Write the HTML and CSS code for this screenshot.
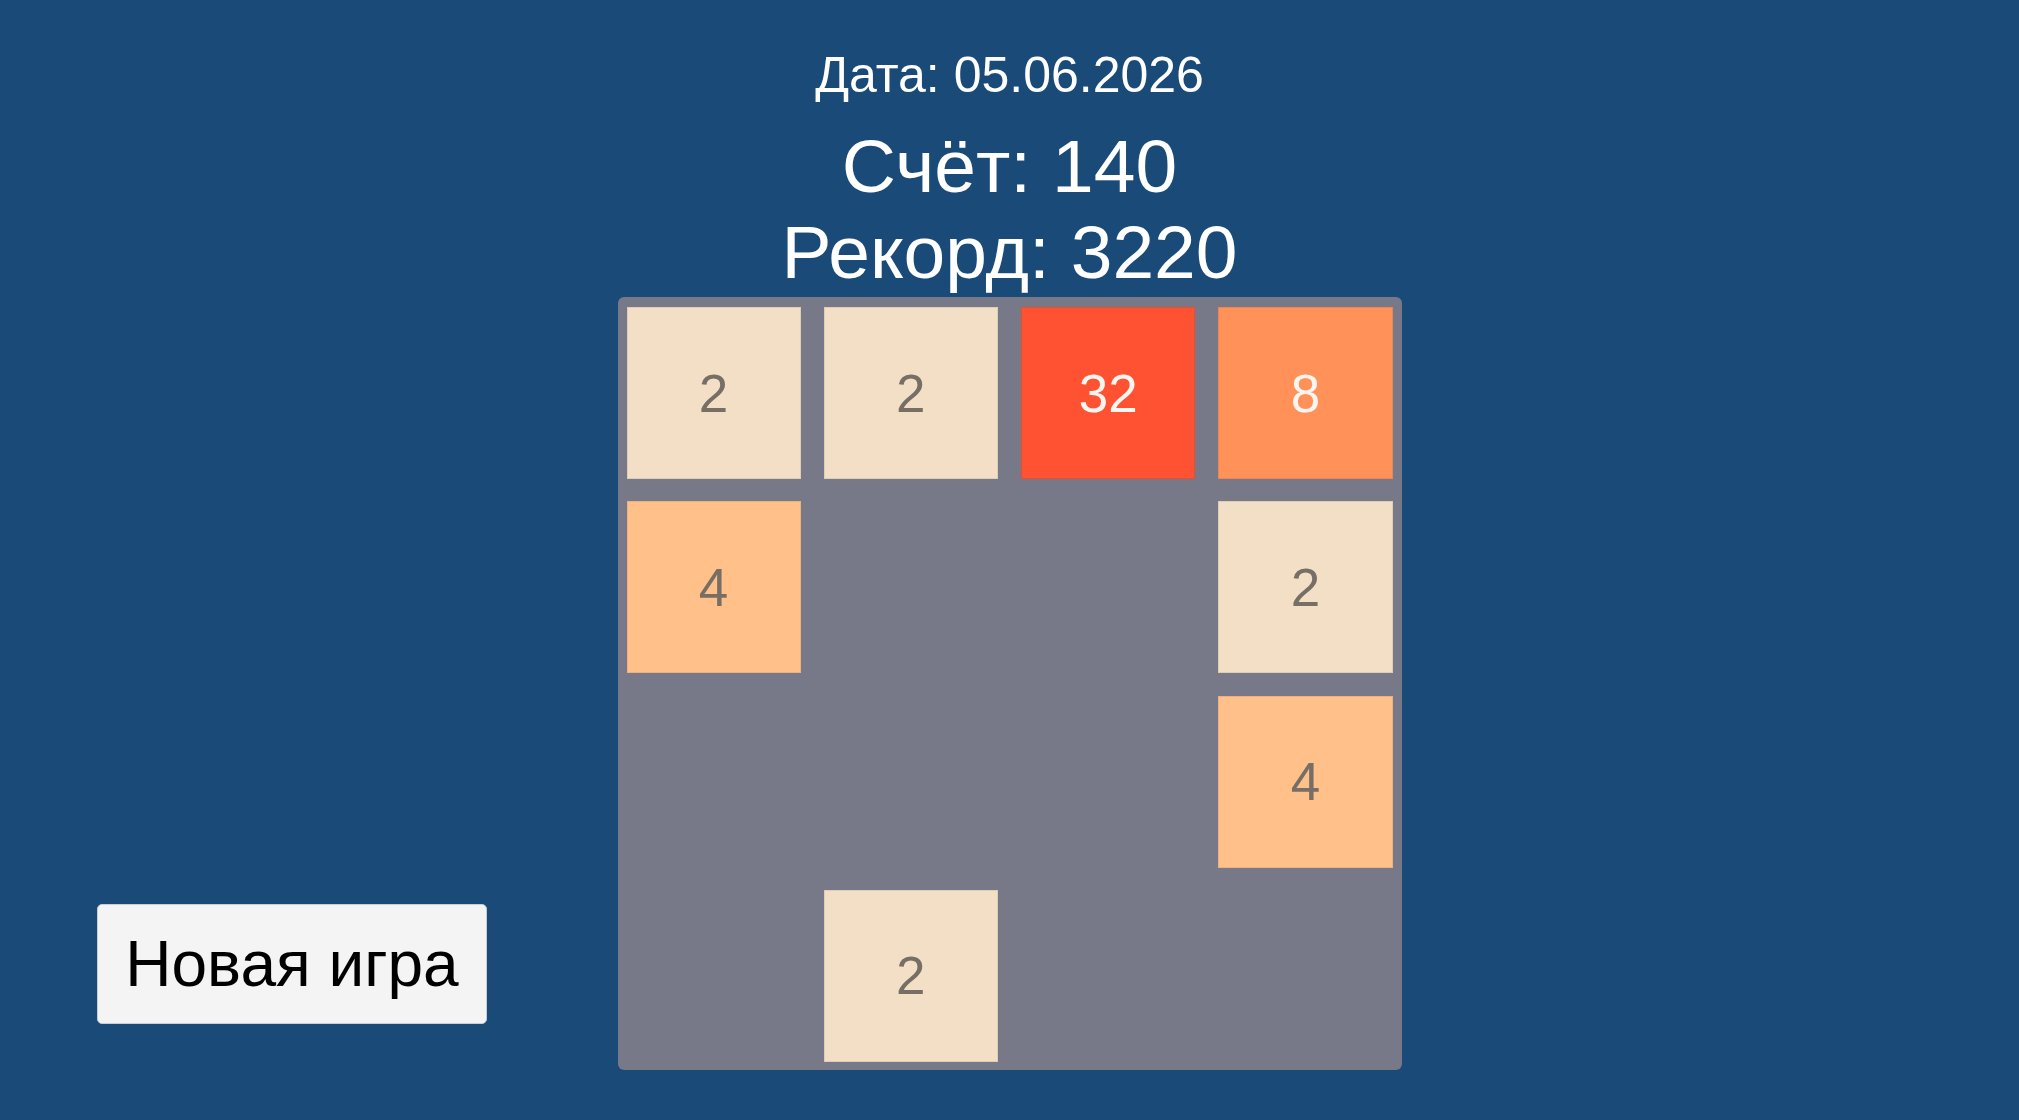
FILE: index.html
```html
<!DOCTYPE html>
<html lang="ru">
<head>
    <meta charset="UTF-8">
    <meta name="viewport" content="width=device-width, initial-scale=1.0">
    <title>2048</title>
    <link rel="stylesheet" href="styles.css">
</head>
<body>
    <div class="screen">
        <div class="side">
            <button class="new-game" id="newGame">Новая игра</button>
        </div>

        <main class="game">
            <div class="date">Дата: 05.06.2026</div>
            <div class="score">Счёт: 140</div>
            <div class="best">Рекорд: 3220</div>

            <div class="board">
                <div class="tile tile-2">2</div>
                <div class="tile tile-2">2</div>
                <div class="tile tile-32">32</div>
                <div class="tile tile-8">8</div>

                <div class="tile tile-4">4</div>
                <div class="cell"></div>
                <div class="cell"></div>
                <div class="tile tile-2">2</div>

                <div class="cell"></div>
                <div class="cell"></div>
                <div class="cell"></div>
                <div class="tile tile-4">4</div>

                <div class="cell"></div>
                <div class="tile tile-2">2</div>
                <div class="cell"></div>
                <div class="cell"></div>
            </div>
        </main>

        <div class="side"></div>
    </div>
</body>
</html>
```

FILE: styles.css
```css
* {
    margin: 0;
    padding: 0;
    box-sizing: border-box;
}

body {
    font-family: "Liberation Sans", Arial, sans-serif;
    background: #194a78;
    min-height: 100vh;
    overflow: hidden;
}

.screen {
    display: grid;
    grid-template-columns: 1fr auto 1fr;
    height: 100vh;
}

.side {
    display: flex;
    align-items: flex-end;
    padding: 0 0 96px 97px;
}

.new-game {
    width: 390px;
    height: 120px;
    background: #f4f4f4;
    border: 1px solid #c9ced6;
    border-radius: 5px;
    font-family: inherit;
    font-size: 64px;
    color: #000;
    cursor: pointer;
}

.game {
    display: flex;
    flex-direction: column;
    align-items: center;
    padding-top: 50px;
    color: #fff;
}

.date {
    font-size: 50px;
    line-height: 50px;
}

.score {
    font-size: 75px;
    line-height: 75px;
    margin-top: 29px;
}

.best {
    font-size: 75px;
    line-height: 75px;
    margin-top: 11px;
}

.board {
    margin-top: 7px;
    width: 784px;
    height: 773px;
    padding: 10px 9px 8px;
    background: #777888;
    border-radius: 6px;
    display: grid;
    grid-template-columns: repeat(4, 1fr);
    grid-template-rows: repeat(4, 1fr);
    column-gap: 23.3px;
    row-gap: 22.3px;
}

.tile {
    display: flex;
    align-items: center;
    justify-content: center;
    font-size: 53px;
    color: #776e65;
    border: 1px solid rgba(0, 0, 0, 0.08);
}

.tile-2 {
    background: #f3dfc6;
}

.tile-4 {
    background: #ffc08a;
}

.tile-8 {
    background: #ff9159;
    color: #f9f6f2;
}

.tile-32 {
    background: #ff5232;
    color: #f9f6f2;
}
```
